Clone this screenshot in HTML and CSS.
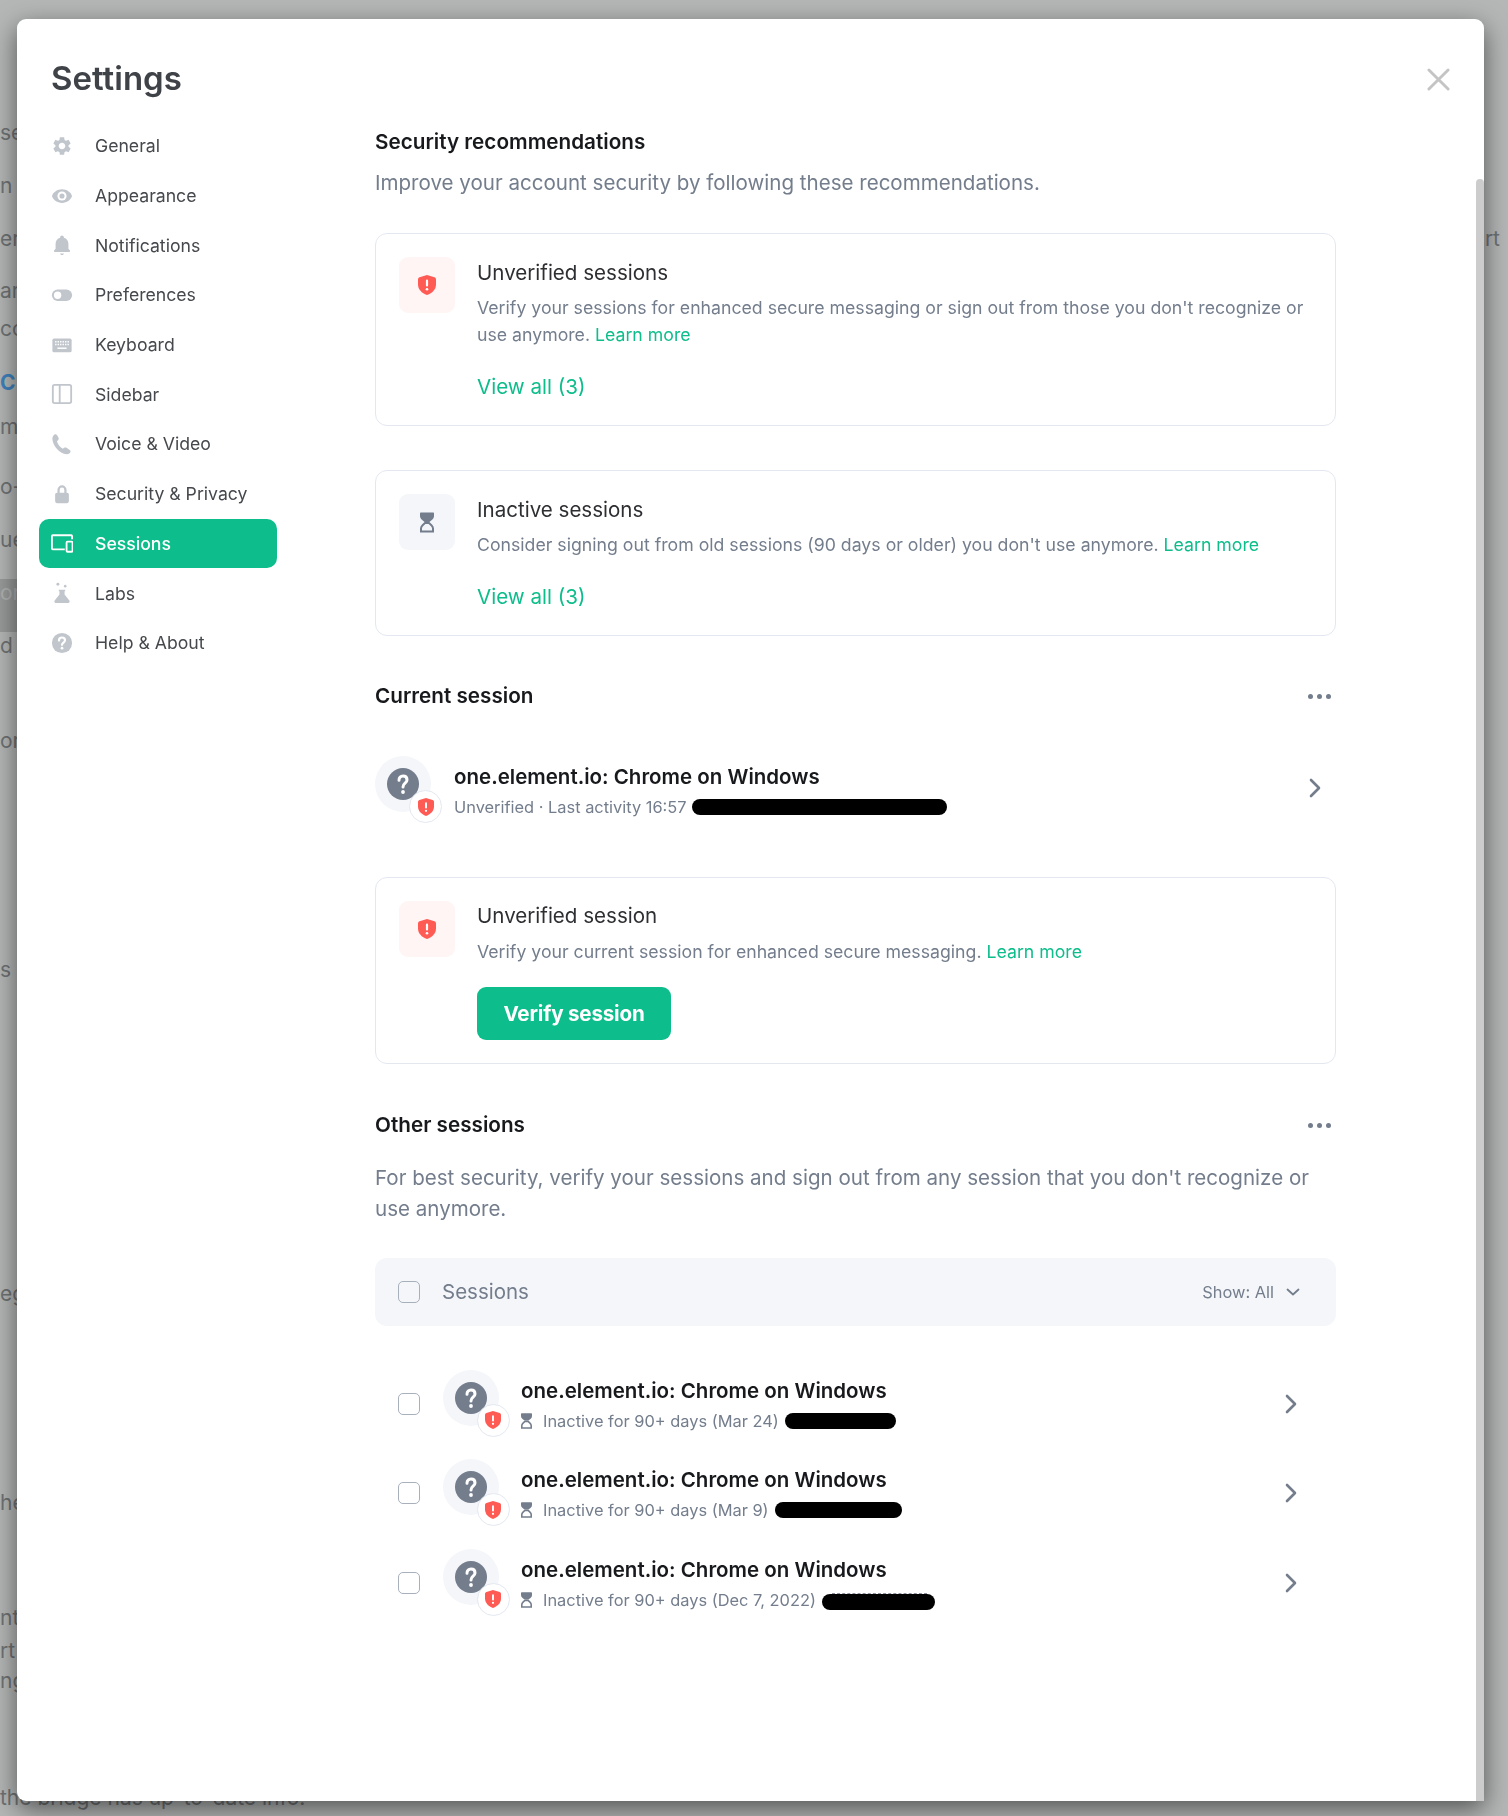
FILE: index.html
```html
<!DOCTYPE html>
<html>
<head>
    <title>Settings</title>
    <link rel="stylesheet" href="styles.css">
</head>
<body>
    <svg class="sprite" xmlns="http://www.w3.org/2000/svg">
        <symbol id="i-shield" viewBox="0 0 18 20">
            <path fill="#ff5b55" d="M9 0 16.400 2.200c.9.3 1.600 1.100 1.600 2.100v5.200c0 4.800-3.600 8.700-9 10.500C3.600 18.200 0 14.300 0 9.500V4.300c0-1 .7-1.800 1.600-2.100z"/>
            <rect x="7.900" y="4.600" width="2.200" height="7" rx="1.100" fill="#fff"/>
            <circle cx="9" cy="14.300" r="1.300" fill="#fff"/>
        </symbol>
        <symbol id="i-hourglass" viewBox="0 0 14 20">
            <path fill="#737d8c" d="M1 0h12c.6 0 1 .4 1 1v2.500c0 1.500-.7 2.800-1.900 3.800L9.400 9.500H4.600L1.900 7.300C.7 6.300 0 5 0 3.500V1c0-.6.4-1 1-1z"/>
            <path fill="none" stroke="#737d8c" stroke-width="2" d="M5 10.500 2.600 12.700C1.600 13.600 1 14.800 1 16v3h12v-3c0-1.200-.6-2.400-1.600-3.300L9 10.500z"/>
        </symbol>
        <symbol id="i-question" viewBox="0 0 32 32">
            <circle cx="16" cy="16" r="16" fill="#737d8c"/>
            <path fill="none" stroke="#fff" stroke-width="3" stroke-linecap="round" d="M12 12.200c0-2.500 1.700-4.200 4-4.200s4 1.500 4 3.900c0 3.200-4 3.500-4 7"/>
            <circle cx="16" cy="24" r="1.900" fill="#fff"/>
        </symbol>
        <symbol id="i-right" viewBox="0 0 12 20">
            <path fill="none" stroke="#737d8c" stroke-width="2.600" stroke-linecap="round" stroke-linejoin="round" d="M2 2l8 8-8 8"/>
        </symbol>
    </svg>

    <div class="backdrop">
        <div class="bg-line row-a">se</div>
        <div class="bg-line row-a">n</div>
        <div class="bg-line row-b"><span>er</span><span>rt</span></div>
        <div class="bg-line row-c">ar</div>
        <div class="bg-line row-d">cc</div>
        <div class="bg-line row-e bg-link">C</div>
        <div class="bg-line row-f">m</div>
        <div class="bg-line row-a">o-</div>
        <div class="bg-line row-a">ue</div>
        <div class="bg-line row-a"><span class="bg-mark">org</span></div>
        <div class="bg-line row-g">d b</div>
        <div class="bg-line row-h">ori</div>
        <div class="bg-line row-i">s v</div>
        <div class="bg-line row-j">eg</div>
        <div class="bg-line row-k">he</div>
        <div class="bg-line row-l">nt</div>
        <div class="bg-line row-m">rt</div>
        <div class="bg-line row-n">ng</div>
        <div class="bg-line bg-last">the bridge has up-to-date info.</div>
    </div>

    <div class="dialog">
        <div class="dialog-head">
            <h1>Settings</h1>
            <svg class="close" viewBox="0 0 24 24"><path d="M2 2l20 20M22 2 2 22"/></svg>
        </div>
        <div class="dialog-body">
            <ul class="nav">
                <li class="nav-item">
                    <svg class="nav-icon" viewBox="0 0 24 24"><path d="M19.140 12.940c.04-.3.06-.61.06-.94 0-.32-.02-.64-.07-.94l2.030-1.580c.18-.14.23-.41.12-.61l-1.920-3.320c-.12-.22-.37-.29-.59-.22l-2.390.96c-.5-.38-1.030-.7-1.620-.94l-.36-2.540c-.04-.24-.24-.41-.48-.41h-3.840c-.24 0-.43.17-.47.41l-.36 2.540c-.59.24-1.130.57-1.620.94l-2.390-.96c-.22-.08-.47 0-.59.22L2.740 8.870c-.12.21-.08.47.12.61l2.030 1.580c-.05.3-.09.63-.09.94s.02.64.07.94l-2.030 1.580c-.18.14-.23.41-.12.61l1.920 3.320c.12.22.37.29.59.22l2.390-.96c.5.38 1.030.7 1.620.94l.36 2.540c.05.24.24.41.48.41h3.840c.24 0 .44-.17.47-.41l.36-2.540c.59-.24 1.130-.56 1.620-.94l2.390.96c.22.08.47 0 .59-.22l1.920-3.320c.12-.22.07-.47-.12-.61l-2.010-1.580zM12 15.600c-1.980 0-3.600-1.620-3.600-3.600s1.620-3.600 3.600-3.600 3.600 1.620 3.600 3.600-1.620 3.600-3.600 3.600z"/></svg>
                    General
                </li>
                <li class="nav-item">
                    <svg class="nav-icon" viewBox="0 0 24 24"><path d="M12 4.500C6.800 4.500 2.500 7.600 1 12c1.500 4.400 5.800 7.500 11 7.500s9.500-3.100 11-7.500c-1.500-4.400-5.800-7.500-11-7.500z"/><circle cx="12" cy="12" r="5" fill="#fff"/><circle cx="12" cy="12" r="2.800"/></svg>
                    Appearance
                </li>
                <li class="nav-item">
                    <svg class="nav-icon" viewBox="0 0 24 24"><path d="M12 23c1.200 0 2.100-.8 2.100-1.700H9.900c0 .9.900 1.700 2.100 1.700zm7-7v-5c0-3.400-1.800-6.100-5-6.900V3.500C14 2.400 13.100 1.500 12 1.500s-2 .9-2 2v.6C6.800 4.900 5 7.600 5 11v5l-1.700 2c-.3.4-.2 1.500.6 1.500h16.200c.8 0 .9-1.100.6-1.500z"/></svg>
                    Notifications
                </li>
                <li class="nav-item">
                    <svg class="nav-icon" viewBox="0 0 24 24"><rect x="1" y="6" width="22" height="12.500" rx="6.250"/><circle cx="7.200" cy="12.250" r="4" fill="#fff"/></svg>
                    Preferences
                </li>
                <li class="nav-item">
                    <svg class="nav-icon" viewBox="0 0 24 24"><rect x="1.500" y="5" width="21" height="15" rx="1.800"/><path fill="none" stroke="#fff" stroke-width="1.500" stroke-dasharray="1.500 1.200" d="M4.500 8.500h15M4.500 11.500h15"/><path fill="none" stroke="#fff" stroke-width="1.600" d="M7 15.500h10"/></svg>
                    Keyboard
                </li>
                <li class="nav-item">
                    <svg class="nav-icon nav-line" viewBox="0 0 24 24"><rect x="2" y="2" width="20" height="20" rx="2"/><path d="M9.500 2v20"/></svg>
                    Sidebar
                </li>
                <li class="nav-item">
                    <svg class="nav-icon" viewBox="0 0 24 24"><path d="M3.500 1.800c1-.7 2.300-.5 3 .5l1.600 2.600c.6.900.4 2.200-.4 2.900L6.500 9c.8 3.100 3.100 6.400 6.400 8.200l1.400-1c.8-.6 1.900-.6 2.700 0l3.400 2.300c1 .7 1.300 2 .5 2.900-.8 1-2.100 1.900-3.500 1.800C8.500 22.500 1.500 13 1.500 6c0-1.700.9-3.200 2-4.200z"/></svg>
                    Voice &amp; Video
                </li>
                <li class="nav-item">
                    <svg class="nav-icon" viewBox="0 0 24 24"><path fill-rule="evenodd" d="M7 10.500V7.500a5 5 0 0 1 10 0v3h.5a2 2 0 0 1 2 2V20a2 2 0 0 1-2 2h-11a2 2 0 0 1-2-2v-7.500a2 2 0 0 1 2-2zm2.500 0h5v-3a2.500 2.500 0 0 0-5 0z"/></svg>
                    Security &amp; Privacy
                </li>
                <li class="nav-item active">
                    <svg class="nav-icon nav-line" viewBox="0 0 24 24"><path d="M23 8V4.500a1 1 0 0 0-1-1H2a1 1 0 0 0-1 1v13.500a1 1 0 0 0 1 1h13"/><rect x="17" y="10.500" width="6.500" height="11" rx="1"/></svg>
                    Sessions
                </li>
                <li class="nav-item">
                    <svg class="nav-icon" viewBox="0 0 24 24"><path d="M8.500 8.500h7V10h-.7v3.500l5.200 6.700c.8 1.100.1 2.800-1.300 2.800H5.300c-1.400 0-2.100-1.700-1.300-2.800l5.200-6.700V10h-.7z"/><circle cx="7.500" cy="2.500" r="1.600"/><circle cx="15.500" cy="4.500" r="1.400"/></svg>
                    Labs
                </li>
                <li class="nav-item">
                    <svg class="nav-icon" viewBox="0 0 24 24"><circle cx="12" cy="12" r="11"/><path fill="none" stroke="#fff" stroke-width="2.400" stroke-linecap="round" d="M8.700 9.300c0-2 1.500-3.300 3.300-3.300s3.300 1.200 3.300 3c0 2.400-3.300 2.600-3.300 5"/><circle cx="12" cy="17.600" r="1.500" fill="#fff"/></svg>
                    Help &amp; About
                </li>
            </ul>

            <div class="content">
                <h2 class="section-title">Security recommendations</h2>
                <p class="section-sub sub-one">Improve your account security by following these recommendations.</p>

                <div class="card card-first">
                    <div class="card-icon alert"><svg class="shield"><use href="#i-shield"/></svg></div>
                    <div class="card-text">
                        <div class="card-title">Unverified sessions</div>
                        <p class="card-desc">Verify your sessions for enhanced secure messaging or sign out from those you don't recognize or use anymore. <a>Learn more</a></p>
                        <a class="view-all">View all (3)</a>
                    </div>
                </div>

                <div class="card card-second">
                    <div class="card-icon neutral"><svg class="glass"><use href="#i-hourglass"/></svg></div>
                    <div class="card-text">
                        <div class="card-title">Inactive sessions</div>
                        <p class="card-desc">Consider signing out from old sessions (90 days or older) you don't use anymore. <a>Learn more</a></p>
                        <a class="view-all">View all (3)</a>
                    </div>
                </div>

                <div class="section-head head-current">
                    <h2 class="section-title">Current session</h2>
                    <div class="dots"><i></i><i></i><i></i></div>
                </div>

                <div class="device current">
                    <div class="avatar">
                        <svg class="avatar-q"><use href="#i-question"/></svg>
                        <div class="badge"><svg class="badge-shield"><use href="#i-shield"/></svg></div>
                    </div>
                    <div class="device-text">
                        <div class="device-name">one.element.io: Chrome on Windows</div>
                        <div class="device-sub">Unverified · Last activity 16:57<span class="redact r-current"></span></div>
                    </div>
                    <svg class="chevron"><use href="#i-right"/></svg>
                </div>

                <div class="card card-third">
                    <div class="card-icon alert"><svg class="shield"><use href="#i-shield"/></svg></div>
                    <div class="card-text">
                        <div class="card-title">Unverified session</div>
                        <p class="card-desc">Verify your current session for enhanced secure messaging. <a>Learn more</a></p>
                        <button class="verify">Verify session</button>
                    </div>
                </div>

                <div class="section-head head-other">
                    <h2 class="section-title">Other sessions</h2>
                    <div class="dots"><i></i><i></i><i></i></div>
                </div>
                <p class="section-sub sub-two">For best security, verify your sessions and sign out from any session that you don't recognize or use anymore.</p>

                <div class="filter">
                    <span class="check"></span>
                    <span class="filter-label">Sessions</span>
                    <span class="filter-show">Show: All</span>
                    <svg class="caret" viewBox="0 0 14 8"><path d="M1.500 1.500 7 6.500l5.500-5"/></svg>
                </div>

                <div class="device-list">
                    <div class="device other">
                        <span class="check"></span>
                        <div class="avatar">
                            <svg class="avatar-q"><use href="#i-question"/></svg>
                            <div class="badge"><svg class="badge-shield"><use href="#i-shield"/></svg></div>
                        </div>
                        <div class="device-text">
                            <div class="device-name">one.element.io: Chrome on Windows</div>
                            <div class="device-sub"><svg class="mini-glass"><use href="#i-hourglass"/></svg>Inactive for 90+ days (Mar 24)<span class="redact r-one"></span></div>
                        </div>
                        <svg class="chevron"><use href="#i-right"/></svg>
                    </div>
                    <div class="device other">
                        <span class="check"></span>
                        <div class="avatar">
                            <svg class="avatar-q"><use href="#i-question"/></svg>
                            <div class="badge"><svg class="badge-shield"><use href="#i-shield"/></svg></div>
                        </div>
                        <div class="device-text">
                            <div class="device-name">one.element.io: Chrome on Windows</div>
                            <div class="device-sub"><svg class="mini-glass"><use href="#i-hourglass"/></svg>Inactive for 90+ days (Mar 9)<span class="redact r-two"></span></div>
                        </div>
                        <svg class="chevron"><use href="#i-right"/></svg>
                    </div>
                    <div class="device other">
                        <span class="check"></span>
                        <div class="avatar">
                            <svg class="avatar-q"><use href="#i-question"/></svg>
                            <div class="badge"><svg class="badge-shield"><use href="#i-shield"/></svg></div>
                        </div>
                        <div class="device-text">
                            <div class="device-name">one.element.io: Chrome on Windows</div>
                            <div class="device-sub"><svg class="mini-glass"><use href="#i-hourglass"/></svg>Inactive for 90+ days (Dec 7, 2022)<span class="redact r-three"></span></div>
                        </div>
                        <svg class="chevron"><use href="#i-right"/></svg>
                    </div>
                </div>
            </div>
        </div>
        <div class="scroll-thumb"></div>
    </div>
</body>
</html>
```

FILE: styles.css
```css
* { box-sizing: border-box; }
html, body { margin: 0; height: 100%; }
body { font-family: Inter, "Noto Sans", sans-serif; background-color: #b5b7b7; overflow: hidden; }
.sprite { display: none; }

/* page behind the dialog */
.backdrop { height: 1816px; padding-top: 119px; color: #6f7273; font-size: 21px; overflow: hidden; }
.bg-line { display: flex; justify-content: space-between; line-height: 28px; padding-right: 8px; }
.row-a { height: 53px; }
.row-b { height: 52px; }
.row-c { height: 38px; }
.row-d { height: 54px; }
.row-e { height: 44px; }
.row-f { height: 60px; }
.row-g { height: 95px; }
.row-h { height: 229px; }
.row-i { height: 324px; }
.row-j { height: 209px; }
.row-k { height: 115px; }
.row-l { height: 33px; }
.row-m { height: 30px; }
.row-n { height: 117px; }
.bg-link { color: #3f82bd; font-weight: 700; }
.bg-mark { background-color: #999b9b; color: #b0b1b1; padding-right: 20px; }

/* dialog */
.dialog { position: fixed; left: 17px; top: 19px; width: 1467px; height: 1782px; background-color: #fff; border-radius: 9px 9px 0 9px; box-shadow: 0 8px 26px rgba(0, 0, 0, 0.55); overflow: hidden; }
.dialog-head { display: flex; justify-content: space-between; align-items: center; height: 102px; padding: 16px 34px 0 34px; }
.dialog-head h1 { margin: 0; font-size: 33px; font-weight: 600; color: #3f4348; }
.close { width: 23px; height: 23px; margin-top: 2px; fill: none; stroke: #c4c4c4; stroke-width: 3; stroke-linecap: round; }
.dialog-body { display: flex; }
.scroll-thumb { position: absolute; right: 0; top: 160px; bottom: 0; width: 8px; background-color: #ccc; border-radius: 4px 4px 0 0; }

/* sidebar */
.nav { list-style: none; margin: 0 0 0 22px; padding: 0; width: 238px; flex-shrink: 0; }
.nav-item { display: flex; align-items: center; gap: 22px; height: 49.700px; padding-left: 12px; font-size: 17.650px; color: #45484c; border-radius: 10px; }
.nav-icon { width: 22px; height: 22px; fill: #c1c6cd; flex-shrink: 0; }
.nav-line { fill: none; stroke: #c1c6cd; stroke-width: 2; }
.nav-item.active { background-color: #0dbd8b; color: #fff; font-weight: 500; }
.active .nav-line { stroke: #fff; }

/* main column */
.content { width: 961px; margin-left: 98px; padding-top: 7px; }
.section-title { margin: 0; font-size: 20.700px; line-height: 28px; font-weight: 600; color: #17191c; }
.section-sub { margin: 0; font-size: 20.550px; line-height: 30.500px; color: #737d8c; }
.sub-one { margin-top: 12px; }
.sub-two { margin-top: 24px; }
.section-head { display: flex; justify-content: space-between; align-items: center; padding-right: 5px; }
.head-current { margin-top: 46px; }
.head-other { margin-top: 47px; }
.dots { display: flex; gap: 4px; margin-top: 1px; }
.dots i { width: 5px; height: 5px; border-radius: 50%; background-color: #737d8c; }

/* cards */
.card { display: flex; gap: 22px; padding: 23px; border: 1px solid #e3e8f0; border-radius: 12px; }
.card-first { margin-top: 34.500px; height: 193px; }
.card-second { margin-top: 44px; height: 166px; }
.card-third { margin-top: 58px; height: 187px; }
.card-icon { display: flex; align-items: center; justify-content: center; width: 56px; height: 56px; border-radius: 9px; flex-shrink: 0; }
.alert { background-color: #fff5f5; }
.neutral { background-color: #f4f6fa; }
.shield { width: 18px; height: 20px; }
.glass { width: 14px; height: 21px; }
.card-text { flex: 1; padding-top: 3px; }
.card-third .card-text { padding-top: 2px; }
.card-title { font-size: 20.550px; line-height: 26px; color: #2e2f32; }
.card-desc { margin: 8px 0 0 0; font-size: 17.700px; line-height: 27px; color: #737d8c; }
.card-third .card-desc { margin-top: 9px; }
.card a { color: #0dbd8b; }
.view-all { display: block; margin-top: 25px; font-size: 20.600px; line-height: 28px; }
.verify { display: block; margin-top: 22px; width: 194px; height: 53px; border: none; border-radius: 9px; background-color: #0dbd8b; color: #fff; font-family: inherit; font-size: 20.600px; font-weight: 700; letter-spacing: -0.2px; }

/* device rows */
.device { display: flex; align-items: flex-start; gap: 23px; }
.current { margin-top: 46px; padding-right: 15px; }
.avatar { position: relative; width: 56px; height: 56px; border-radius: 50%; background-color: #f4f6fa; display: flex; align-items: center; justify-content: center; flex-shrink: 0; }
.avatar-q { width: 32px; height: 32px; }
.badge { position: absolute; right: -11px; bottom: -11px; width: 33px; height: 33px; border-radius: 50%; border: 1px solid #e3e8f0; background-color: #fff; display: flex; align-items: center; justify-content: center; }
.badge-shield { width: 16px; height: 18px; }
.device-text { flex: 1; padding-top: 8px; }
.device-name { font-size: 20.500px; line-height: 26px; font-weight: 600; color: #17191c; }
.device-sub { display: flex; align-items: center; gap: 6px; margin-top: 5px; font-size: 16.400px; line-height: 24px; color: #737d8c; }
.chevron { width: 12px; height: 20px; margin-top: 22px; flex-shrink: 0; }
.redact { position: relative; display: inline-block; height: 16px; border-radius: 8px; background-color: #000; }
.r-current { width: 255px; margin-left: -1px; }
.r-one { width: 111px; }
.r-two { width: 127px; }
.r-three { width: 113px; margin-top: 4px; }
.r-three::before { content: ""; position: absolute; left: 10px; right: 8px; top: -1px; border-top: 1px dashed #8b929d; }
.mini-glass { width: 11px; height: 18px; margin-right: 5px; flex-shrink: 0; }

/* session list */
.filter { display: flex; align-items: center; height: 68px; margin-top: 33.500px; padding: 0 36px 0 23px; background-color: #f4f6fa; border-radius: 12px; }
.filter-label { flex: 1; margin-left: 22px; font-size: 20.500px; color: #737d8c; }
.filter-show { font-size: 16.400px; color: #737d8c; }
.caret { width: 14px; height: 8px; margin-left: 12px; fill: none; stroke: #737d8c; stroke-width: 1.800; stroke-linecap: round; stroke-linejoin: round; }
.check { width: 22px; height: 22px; border: 1.500px solid #a8b0bc; border-radius: 5px; background-color: #fff; flex-shrink: 0; }
.filter .check { background-color: transparent; }
.device-list { display: flex; flex-direction: column; gap: 26.500px; margin-top: 44px; }
.other { gap: 22.500px; padding: 0 39px 0 23px; }
.other .check { margin-top: 23px; }
.other .chevron { margin-top: 24px; }
```
